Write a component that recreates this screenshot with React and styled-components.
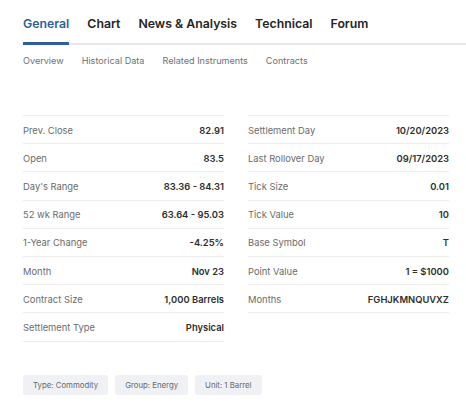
import React from "react";
import styled, { createGlobalStyle } from "styled-components";

const GlobalStyle = createGlobalStyle`
  body {
    margin: 0;
    background: #ffffff;
    font-family: Inter, "Noto Sans", sans-serif;
  }
`;

const tabs = ["General", "Chart", "News & Analysis", "Technical", "Forum"];
const subTabs = ["Overview", "Historical Data", "Related Instruments", "Contracts"];

const leftRows = [
  ["Prev. Close", "82.91"],
  ["Open", "83.5"],
  ["Day's Range", "83.36 - 84.31"],
  ["52 wk Range", "63.64 - 95.03"],
  ["1-Year Change", "-4.25%"],
  ["Month", "Nov 23"],
  ["Contract Size", "1,000 Barrels"],
  ["Settlement Type", "Physical"],
];

const rightRows = [
  ["Settlement Day", "10/20/2023"],
  ["Last Rollover Day", "09/17/2023"],
  ["Tick Size", "0.01"],
  ["Tick Value", "10"],
  ["Base Symbol", "T"],
  ["Point Value", "1 = $1000"],
  ["Months", "FGHJKMNQUVXZ"],
];

const tags = ["Type: Commodity", "Group: Energy", "Unit: 1 Barrel"];

const App = () => {
  return (
    <Page>
      <GlobalStyle />
      <TabBar>
        {tabs.map((t, i) => (
          <Tab key={t} active={i === 0}>{t}</Tab>
        ))}
      </TabBar>
      <SubTabBar>
        {subTabs.map((t) => (
          <SubTab key={t}>{t}</SubTab>
        ))}
      </SubTabBar>
      <Columns>
        <Table>
          {leftRows.map(([k, v]) => (
            <Row key={k}>
              <Label>{k}</Label>
              <Value>{v}</Value>
            </Row>
          ))}
        </Table>
        <Table>
          {rightRows.map(([k, v]) => (
            <Row key={k}>
              <Label>{k}</Label>
              <Value>{v}</Value>
            </Row>
          ))}
        </Table>
      </Columns>
      <Tags>
        {tags.map((t) => (
          <Tag key={t}>{t}</Tag>
        ))}
      </Tags>
    </Page>
  );
};

export default App;

let Page = styled.div`
  width: 466px;
  height: 412px;
  padding-left: 23px;
  box-sizing: border-box;
  overflow: hidden;
`;

let TabBar = styled.div`
  display: flex;
  gap: 18px;
  height: 45px;
  border-bottom: 2px solid #e6e7ea;
  box-sizing: border-box;
  padding-top: 14px;
`;

let Tab = styled.div`
  font-size: 12.3px;
  font-weight: 600;
  line-height: 20px;
  color: ${(p) => (p.active ? "#2f5f99" : "#242424")};
  position: relative;
  height: 29px;
  &::after {
    content: "";
    display: ${(p) => (p.active ? "block" : "none")};
    position: absolute;
    left: 0;
    right: 0;
    bottom: -2px;
    height: 3px;
    background: #2f5f99;
  }
`;

let SubTabBar = styled.div`
  display: flex;
  gap: 18px;
  padding-top: 9px;
  height: 70px;
  box-sizing: border-box;
`;

let SubTab = styled.div`
  font-size: 9.1px;
  line-height: 14px;
  color: #6e7177;
`;

let Columns = styled.div`
  display: flex;
  gap: 24px;
  width: 426px;
  align-items: flex-start;
`;

let Table = styled.div`
  flex: 1;
  border-top: 1px solid #ececec;
`;

let Row = styled.div`
  display: flex;
  justify-content: space-between;
  align-items: center;
  height: 28.2px;
  box-sizing: border-box;
  border-bottom: 1px solid #ececec;
  font-size: 9.4px;
  padding-top: 1px;
`;

let Label = styled.span`
  color: #6b6b6b;
`;

let Value = styled.span`
  color: #2e2e2e;
  font-weight: 600;
`;

let Tags = styled.div`
  display: flex;
  gap: 7px;
  margin-top: 33px;
`;

let Tag = styled.div`
  background: #eff1f4;
  color: #666a70;
  font-size: 7.8px;
  height: 20px;
  line-height: 20px;
  padding: 0 10px;
  border-radius: 3px;
`;
